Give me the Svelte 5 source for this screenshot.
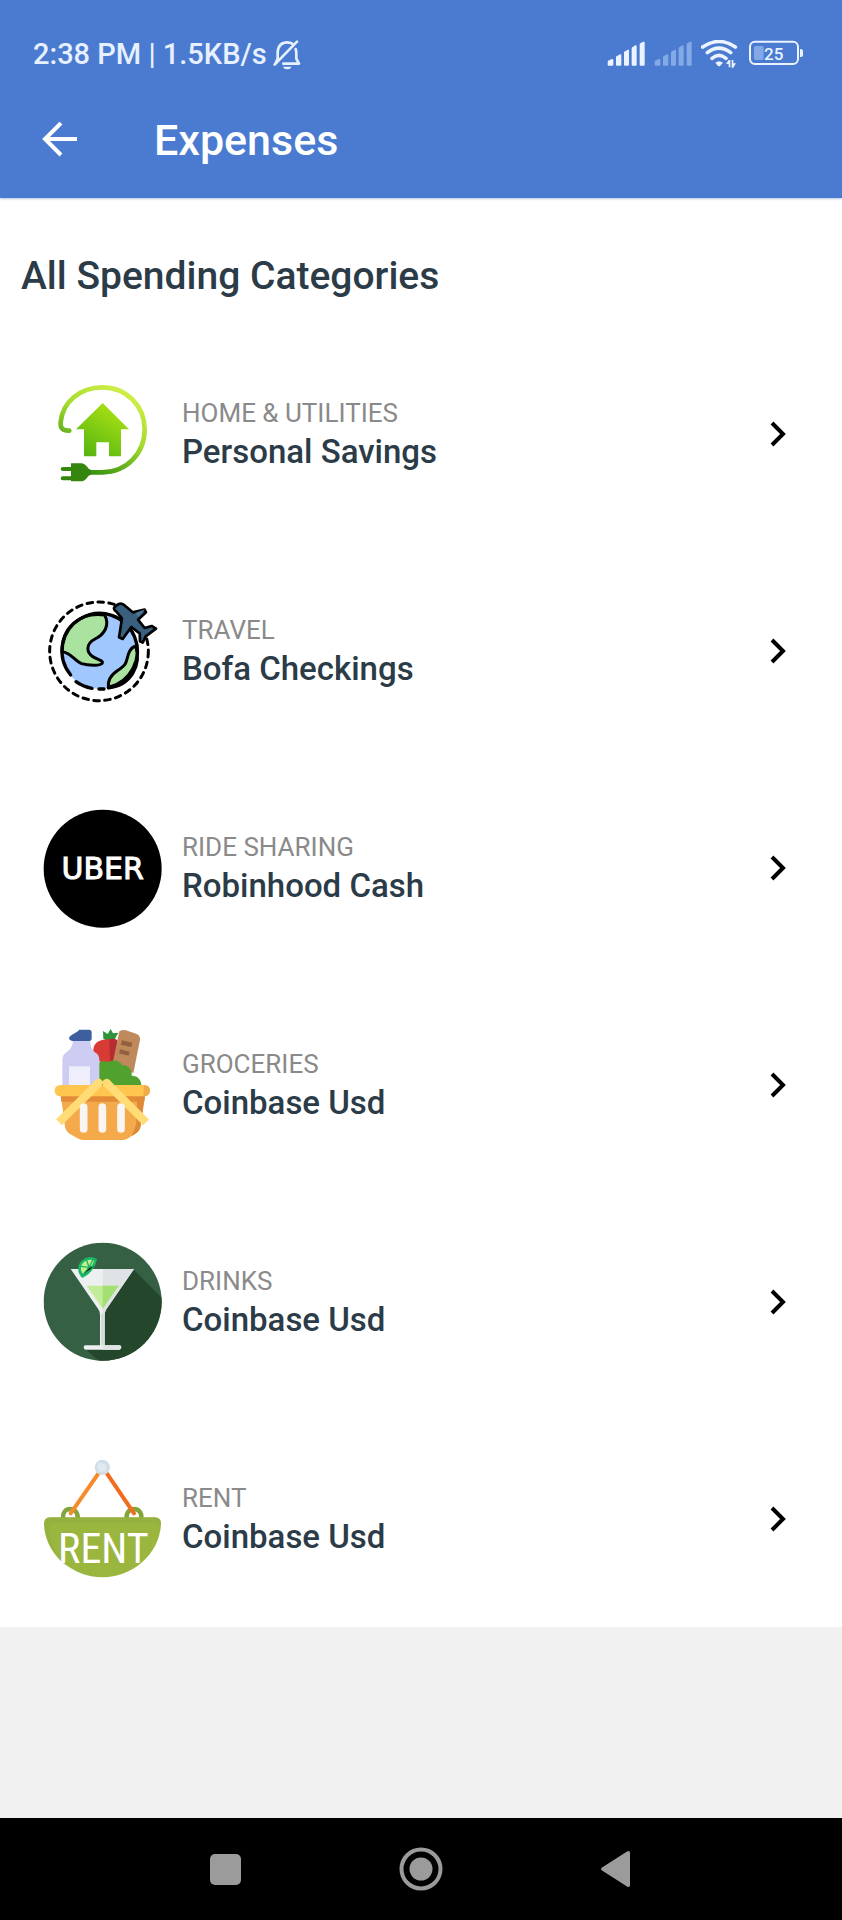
<script>
  const categories = [
    { icon: 'home', label: 'Home & Utilities', account: 'Personal Savings' },
    { icon: 'travel', label: 'Travel', account: 'Bofa Checkings' },
    { icon: 'uber', label: 'Ride Sharing', account: 'Robinhood Cash' },
    { icon: 'groceries', label: 'Groceries', account: 'Coinbase Usd' },
    { icon: 'drinks', label: 'Drinks', account: 'Coinbase Usd' },
    { icon: 'rent', label: 'Rent', account: 'Coinbase Usd' },
  ];
</script>

{#snippet signal(weak)}
  <svg class="signal" class:weak viewBox="51 60 114 84" aria-hidden="true">
    <path d="M53 127q0-4 4-6l9-4q4-1 4 3v14q0 3-3 3H56q-3 0-3-3zM78 112q0-4 4-5l8-4q4-1 4 3v28q0 3-3 3H81q-3 0-3-3zM102 98q0-3 3-4l9-5q3-1 3 3v42q0 3-3 3h-9q-3 0-3-3zM125 85q0-3 3-4l8-5q4-1 4 3v55q0 3-3 3h-9q-3 0-3-3zM149 73q0-3 3-4l8-4q4-1 4 3v66q0 3-3 3h-9q-3 0-3-3z" />
  </svg>
{/snippet}

{#snippet picture(name)}
  {#if name === 'home'}
    <svg class="picture" viewBox="42 14 354 354" aria-hidden="true">
      <defs>
        <linearGradient id="cord" x1="0.8" y1="0" x2="0.25" y2="1">
          <stop offset="0" stop-color="#d5f04c" />
          <stop offset="0.45" stop-color="#a4db2d" />
          <stop offset="1" stop-color="#2f8d10" />
        </linearGradient>
        <linearGradient id="house" x1="0.8" y1="0" x2="0.2" y2="1">
          <stop offset="0" stop-color="#b0e414" />
          <stop offset="1" stop-color="#56b512" />
        </linearGradient>
      </defs>
      <path d="M118 181c-20 1-28-8-26-26C98 96 149 51 217 51c73 0 127 57 127 126 0 73-55 129-127 129h-45" fill="none" stroke="url(#cord)" stroke-width="14" stroke-linecap="round" />
      <path d="M218 98l79 79h-24v81h-36v-42h-38v42h-37v-81h-24z" fill="url(#house)" />
      <path d="M123 279h28c14 0 18 8 25 16l7 4v14l-7 3c-7 9-12 17-25 17h-28v-3H99q-7 0-7-6t7-6h24v-16H99q-7 0-7-6t7-6h24z" fill="#34860f" />
    </svg>
  {:else if name === 'travel'}
    <svg class="picture" viewBox="42 20 354 354" aria-hidden="true">
      <circle cx="207" cy="198" r="148" fill="none" stroke="#000" stroke-width="9" stroke-linecap="round" stroke-dasharray="17 16" />
      <circle cx="208" cy="198" r="113" fill="#a0c8ff" />
      <path d="M224 89c17 31-2 59-29 72-30 15-26 43-3 55 16 9 28 10 25 17-4 10-45 7-62 2-21-8-31-33-59-36C94 129 150 78 224 89z" fill="#aae2a0" stroke="#000" stroke-width="9" stroke-linejoin="round" />
      <path d="M236 308c-5-25 8-40 28-53 28-19 23-22 31-48 5-15 11-22 22-25 19 57-14 119-81 126z" fill="#aae2a0" stroke="#000" stroke-width="9" stroke-linejoin="round" />
      <path d="M122 269a113 113 0 1 1 113 38M138 289q20 15 48 20M207 311h15" fill="none" stroke="#000" stroke-width="10" stroke-linecap="round" />
      <path d="M260 60c9-7 18-6 26 2l22 19 36-8 4 8-24 22 20 25 21-6 13 8-31 23-9 19-8-4-1-24-25-19-26 36-11-5 9-57-16-19c-10-7-12-13 0-20z" fill="#39617f" stroke="#000" stroke-width="8" stroke-linejoin="round" />
      <path d="M316 83l29-11-20 23z" fill="#4d7693" />
    </svg>
  {:else if name === 'uber'}
    <svg class="picture" viewBox="42 26 354 354" role="img" aria-label="Uber">
      <circle cx="218" cy="205" r="177" />
      <text class="uber" x="218" y="237" text-anchor="middle">UBER</text>
    </svg>
  {:else if name === 'groceries'}
    <svg class="picture" viewBox="42 32 354 354" aria-hidden="true">
      <path d="M219 47l14 9 9-15 7 13 16-2-12 21-20 4-13-7z" fill="#2f9138" />
      <path d="M219 73c-22 4-33 20-28 42 5 19 19 27 36 27h30V70z" fill="#d83b35" />
      <path d="M238 72q14-5 25 3l-5 67h-18z" fill="#b62c30" />
      <path d="M268 48q9-6 20-3l30 10q14 5 12 19l-20 99-64-20z" fill="#bf895b" />
      <path d="M276 75l31 7-3 13-32-7zM270 102l29 7-3 12-29-7z" fill="#91603f" />
      <path d="M190 214v-60c12-15 28-20 44-14 17-9 35-5 43 10 18-2 31 14 28 31 20 0 30 14 29 33z" fill="#51a12f" />
      <path d="M129 73h52c-1 19 4 31 17 40q10 7 10 20v88H97v-88q0-13 10-20c15-11 21-21 22-40z" fill="#cdcdf3" />
      <path d="M117 153h63v60h-63z" fill="#eeeffa" />
      <path d="M148 43h29q8 0 8 8v18q0 8-8 8h-50c-12-4-12-10-5-16 9-7 17-9 26-18z" fill="#3d5f9e" />
      <path d="M92 235h253l-13 98q-3 16-22 26l-18 11q-6 4-16 4H162q-9 0-17-4l-21-12q-17-9-19-24z" fill="#f4a94a" />
      <path d="M92 242h253l-2 17H94z" fill="#e28c38" />
      <path d="M322 245h22l-12 88q-3 16-20 25l-8 4q13-23 15-43z" fill="#df8a38" />
      <rect x="74" y="209" width="286" height="34" rx="16" fill="#ffc64f" />
      <path d="M342 209q19 2 18 18-2 16-20 16z" fill="#efab48" />
      <path d="M87 321L207 202M229 202l119 119" fill="none" stroke="#ffdc75" stroke-width="25" />
      <circle cx="205" cy="203" r="12" fill="#ffdc75" /><circle cx="230" cy="203" r="12" fill="#ffdc75" />
      <path d="M161 275v66M217 275v66M273 275v66" fill="none" stroke="#f8f5f2" stroke-width="23" stroke-linecap="round" />
      <path d="M191 219l24-24M224 196l117 117" stroke="#ffdc75" stroke-width="18" />
    </svg>
  {:else if name === 'drinks'}
    <svg class="picture" viewBox="42 38 354 354" aria-hidden="true">
      <defs><clipPath id="coaster"><circle cx="218" cy="214" r="177" /></clipPath></defs>
      <g clip-path="url(#coaster)">
        <path d="M40 36h356v356H40z" fill="#356044" />
        <path d="M312 119l90 90v190H215l-50-44 50-8V235z" fill="#24472c" />
      </g>
      <path d="M122 116h190l-83 121q-5 8-5 17v91h44q6 0 6 6t-6 7H167q-6 0-6-7t6-6h43v-91q0-9-5-17z" fill="#edf0f0" />
      <path d="M218 116h94l-83 121q-5 8-5 17v91h44q6 0 6 6t-6 7h-50z" fill="#e0e3e5" />
      <path d="M217 250v94" stroke="#c8dbd1" stroke-width="6" />
      <path d="M170 166h96l-48 69z" fill="#c1ec99" />
      <path d="M218 166h48l-48 69z" fill="#a4df72" />
      <path d="M157 143c-20-19-16-51 13-61q17-5 31 5c-4 24-20 44-44 56z" fill="#1bb564" />
      <path d="M159 132c-12-17-6-36 14-43q11-3 19 2c-5 17-16 31-33 41z" fill="#c2ef8b" />
      <path d="M152 108l25 3M169 87l8 24M195 105l-18 6-20 24M190 86l-13 25" stroke="#1bb564" stroke-width="4" />
    </svg>
  {:else}
    <svg class="picture" viewBox="42 44 354 354" role="img" aria-label="Rent">
      <path d="M100 221c-8-40 48-40 43 0M290 221c-6-40 50-40 44 0" fill="none" stroke="#83a43b" stroke-width="13" />
      <path d="M207 82l-85 122" stroke="#f58b2b" stroke-width="12" stroke-linecap="round" />
      <path d="M229 82l83 122" stroke="#f36b1d" stroke-width="12" stroke-linecap="round" />
      <circle cx="217" cy="66" r="23" fill="#d1dee7" />
      <path d="M206 51l22 7 1 18-20 4-8-14z" fill="#dfe9ef" />
      <path d="M59 216h316q18 1 18 18c-3 92-86 162-176 162S44 325 42 234q1-17 17-18z" fill="#9ab63f" />
      <path d="M59 216h316q18 1 18 18l-3 22q-2-21-24-23H72q-14 2-14 17c2 52 29 98 70 124C77 345 44 296 42 234q1-17 17-18z" fill="#8eab3b" opacity="0.35" />
      <text class="rent" x="220" y="354" text-anchor="middle">RENT</text>
    </svg>
  {/if}
{/snippet}

<div class="screen">
  <header>
    <div class="status">
      <span>2:38 PM | 1.5KB/s</span>
      <svg class="bell" viewBox="810 54 84 93" aria-hidden="true">
        <path d="M824 113V94q2-30 29-30 12 0 19 7M878 84q2 6 2 15v14l8 15H841M815 131l67-69M824 113l-6 13" fill="none" stroke="#e6f0ff" stroke-width="8" stroke-linecap="round" stroke-linejoin="round" />
        <path d="M839 137h27q-4 8-13 8t-14-8z" fill="#e6f0ff" />
      </svg>
      <div class="indicators">
        {@render signal(false)}
        {@render signal(true)}
        <svg class="wifi" viewBox="333 60 117 84" aria-hidden="true">
          <path d="M338 81q50-33 98 0M352 98q35-27 70 0M366 115q21-18 42 0" fill="none" stroke="#eaf3ff" stroke-width="11" stroke-linecap="round" />
          <path d="M376 128q11-9 23 0l-9 10q-3 2-6 0zM408 131l8-11h5v22h-5v-10zM425 120h5v10h8l-8 13h-5z" fill="#eaf3ff" />
        </svg>
        <svg class="battery" viewBox="477 60 165 84" aria-hidden="true">
          <rect x="492" y="78" width="29" height="42" rx="5" fill="#82a9e5" />
          <rect x="480" y="65" width="144" height="67" rx="15" fill="none" stroke="#eaf3ff" stroke-width="6" />
          <path d="M630 87q9 0 9 6v12q0 6-9 6z" fill="#eaf3ff" />
          <text x="551" y="121" text-anchor="middle">25</text>
        </svg>
      </div>
    </div>
    <div class="appbar">
      <button class="back" aria-label="Back">
        <svg viewBox="0 0 36 36" aria-hidden="true"><path d="M35 17H4M19 1L3 17l16 16" fill="none" stroke="#fff" stroke-width="4" /></svg>
      </button>
      <h1>Expenses</h1>
    </div>
  </header>

  <main>
    <h2>All Spending Categories</h2>
    <ul>
      {#each categories as category}
        <li>
          <button class="category">
            {@render picture(category.icon)}
            <span class="details">
              <span class="label">{category.label}</span>
              <span class="account">{category.account}</span>
            </span>
            <svg class="chevron" viewBox="0 0 18 28" aria-hidden="true"><path d="M3 3l11 11L3 25" fill="none" stroke="#000" stroke-width="4" /></svg>
          </button>
        </li>
      {/each}
    </ul>
  </main>

  <nav aria-label="System">
    <button aria-label="Recent apps"><svg viewBox="0 0 44 44"><rect x="7" y="7" width="31" height="31" rx="5" /></svg></button>
    <button aria-label="Home"><svg viewBox="0 0 44 44"><circle cx="22" cy="22" r="19.5" fill="none" stroke="#9b9b9b" stroke-width="4" /><circle cx="22" cy="22" r="11.5" /></svg></button>
    <button aria-label="Go back"><svg viewBox="0 0 44 44"><path d="M7 20.500L32 4.500q3-1.500 3 1.500v32q0 3-3 1.500L7 23.500q-2-1.500 0-3z" /></svg></button>
  </nav>
</div>

<style>
  :global(body) {
    margin: 0;
  }
  .screen {
    display: flex;
    flex-direction: column;
    min-height: 100vh;
    background: #f1f1f1;
    color: #2b3b47;
    font-family: Roboto, sans-serif;
  }
  .screen :global(svg) {
    display: block;
    flex: none;
  }
  button {
    padding: 0;
    border: 0;
    background: none;
    color: inherit;
    font: inherit;
    cursor: pointer;
  }
  h1,
  h2,
  ul {
    margin: 0;
    padding: 0;
  }
  header {
    padding: 20px 0 6px;
    background: #4a7bd0;
    color: #fff;
    box-shadow: 0 1px 2px #b5c5df;
    z-index: 1;
  }
  .status {
    display: flex;
    align-items: center;
    height: 68px;
    padding: 0 38px 0 33px;
    color: #e6f0ff;
    font-size: 29px;
    font-weight: 500;
  }
  .bell {
    width: 28px;
    height: 31px;
    margin-left: 6px;
  }
  .indicators {
    display: flex;
    gap: 9px;
    margin-left: auto;
  }
  .indicators svg {
    height: 28px;
  }
  .signal {
    width: 38px;
    fill: #eaf3ff;
  }
  .weak {
    fill: #84aae5;
  }
  .wifi {
    width: 39px;
  }
  .battery {
    width: 55px;
  }
  .battery text {
    fill: #eaf3ff;
    font-size: 51px;
    font-weight: 500;
  }
  .appbar {
    display: flex;
    align-items: center;
    gap: 76px;
    height: 104px;
    padding: 0 42px;
  }
  .back svg {
    width: 36px;
    height: 36px;
  }
  h1 {
    font-size: 43px;
    font-weight: 500;
    line-height: 52px;
  }
  main {
    padding-top: 52px;
    background: #fff;
  }
  h2 {
    padding: 0 21px 23px;
    font-size: 39px;
    font-weight: 500;
    line-height: 52px;
  }
  ul {
    list-style: none;
  }
  .category {
    display: flex;
    align-items: center;
    width: 100%;
    height: 217px;
    padding: 0 55px 0 44px;
    text-align: left;
  }
  .picture {
    width: 118px;
    height: 118px;
    overflow: visible;
  }
  .details {
    display: flex;
    flex: 1;
    flex-direction: column;
    gap: 3px;
    margin-left: 20px;
    padding-bottom: 2px;
  }
  .label {
    color: #8a8a8a;
    font-size: 26px;
    line-height: 36px;
    text-transform: uppercase;
  }
  .account {
    font-size: 33px;
    font-weight: 500;
    line-height: 36px;
  }
  .chevron {
    width: 18px;
    height: 28px;
  }
  .uber {
    fill: #fff;
    stroke: #fff;
    stroke-width: 3;
    font-family: "DejaVu Sans", sans-serif;
    font-size: 90px;
  }
  .rent {
    fill: #fff;
    font-family: "Roboto Condensed", "Liberation Sans Narrow", Roboto, sans-serif;
    font-size: 126px;
    font-weight: 400;
  }
  nav {
    display: grid;
    grid-template-columns: repeat(3, 1fr);
    height: 102px;
    margin-top: auto;
    padding: 0 15%;
    background: #000;
  }
  nav button {
    display: flex;
    align-items: center;
    justify-content: center;
  }
  nav svg {
    width: 44px;
    height: 44px;
    fill: #9b9b9b;
  }
</style>
